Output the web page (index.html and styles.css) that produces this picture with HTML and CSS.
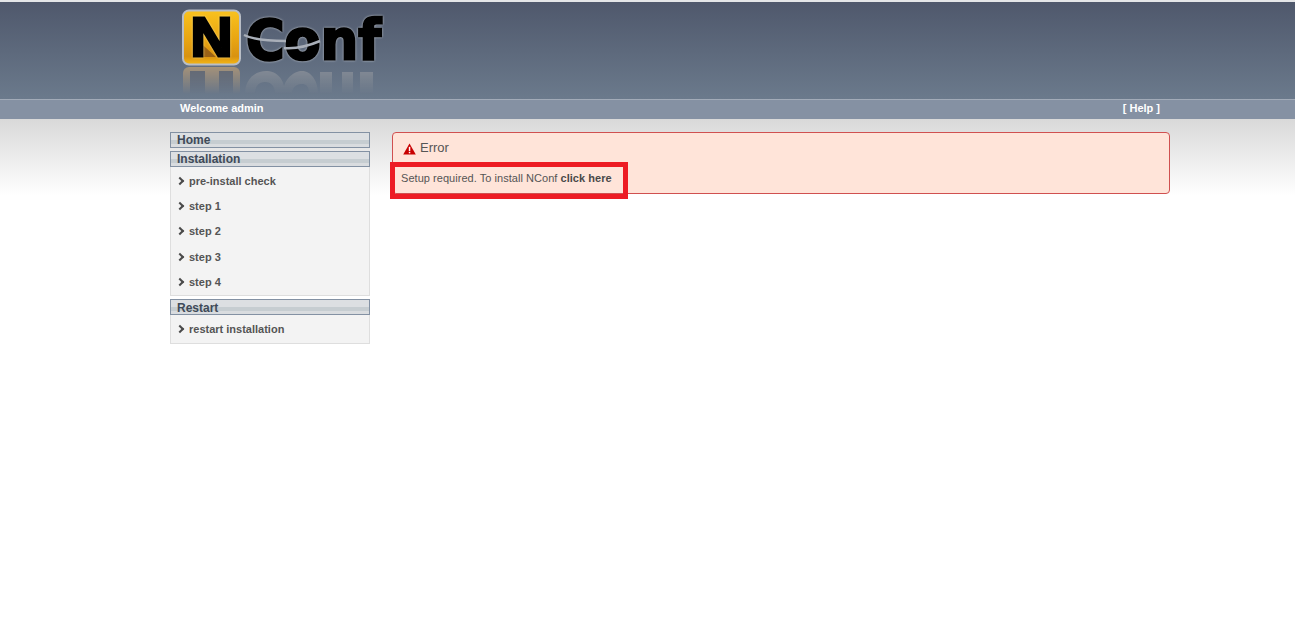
FILE: index.html
```html
<!DOCTYPE html>
<html lang="en">
<head>
<meta charset="utf-8">
<title>NConf</title>
<link rel="stylesheet" href="styles.css">
</head>
<body>
<header class="banner">
  <div class="wrap">
    <svg class="logo" width="220" height="97" viewBox="0 0 220 97" aria-label="NConf">
      <defs>
        <linearGradient id="gold" x1="0" y1="0" x2="0" y2="1">
          <stop offset="0" stop-color="#f9c21e"/>
          <stop offset="0.55" stop-color="#e8a412"/>
          <stop offset="0.85" stop-color="#d89210"/>
          <stop offset="1" stop-color="#f6b814"/>
        </linearGradient>
        <linearGradient id="refl" x1="0" y1="0" x2="0" y2="1">
          <stop offset="0" stop-color="#fff" stop-opacity="0.85"/>
          <stop offset="1" stop-color="#fff" stop-opacity="0"/>
        </linearGradient>
        <mask id="fade"><rect x="0" y="66" width="220" height="28" fill="url(#refl)"/></mask>
      </defs>
      <g mask="url(#fade)">
        <rect x="5" y="67" width="57" height="30" rx="6" fill="#b49a78"/>
        <rect x="12" y="71" width="15" height="24" fill="#666870"/>
        <rect x="41" y="71" width="14" height="24" fill="#666870"/>
        <path d="M67 94C67 78 78 71 88 71S107 78 107 94H97C97 86 93 82 87 82S77 86 77 94Z" fill="#8f949b"/>
        <path d="M105 94C105 78 117 71 124 71S140 78 140 94H131C131 86 128 84 124 84S114 86 114 94Z" fill="#8f949b"/>
        <rect x="142" y="72" width="12" height="22" fill="#8f949b"/>
        <rect x="164" y="72" width="11" height="22" fill="#8f949b"/>
        <rect x="182" y="72" width="13" height="22" fill="#8f949b"/>
      </g>
      <rect x="5" y="10.5" width="57" height="54" rx="6" fill="url(#gold)" stroke="#b9bec6" stroke-width="2"/>
      <path d="M17 57V38L38 57Z" fill="#9a6216"/>
      <text class="logo-n" x="33.5" y="56" textLength="42" lengthAdjust="spacingAndGlyphs">N</text>
      <text class="logo-conf" x="68" y="59" textLength="135" lengthAdjust="spacingAndGlyphs">Conf</text>
      <path class="logo-cut" d="M66 35C74 39 92 41 108 41"/>
      <path class="logo-cut" d="M106 48C118 49 128 47 142 41"/>
    </svg>
  </div>
</header>
<nav class="strip">
  <div class="wrap strip-row">
    <span>Welcome admin</span>
    <a href="#">[ Help ]</a>
  </div>
</nav>
<div class="wash">
  <div class="wrap columns">
    <aside class="sidebar">
      <h2 class="sec">Home</h2>
      <h2 class="sec">Installation</h2>
      <ul class="menu">
        <li><a href="#">pre-install check</a></li>
        <li><a href="#">step 1</a></li>
        <li><a href="#">step 2</a></li>
        <li><a href="#">step 3</a></li>
        <li><a href="#">step 4</a></li>
      </ul>
      <h2 class="sec sec-gap">Restart</h2>
      <ul class="menu menu-single">
        <li><a href="#">restart installation</a></li>
      </ul>
    </aside>
    <main class="content">
      <section class="alert">
        <h1 class="alert-title">
          <svg width="13" height="12" viewBox="0 0 13 12"><path d="M6.5 .5 12.8 11.6H.2Z" fill="#c80000"/><rect x="5.8" y="3.8" width="1.5" height="4.2" fill="#fff"/><rect x="5.8" y="8.8" width="1.5" height="1.5" fill="#fff"/></svg>
          Error
        </h1>
        <p class="alert-text">Setup required. To install NConf <a href="#">click here</a></p>
        <div class="marker"></div>
      </section>
    </main>
  </div>
</div>
</body>
</html>
```
FILE: styles.css
```css
* { box-sizing: border-box; }
html, body { margin: 0; padding: 0; }
body {
  background: #fff;
  font-family: "Liberation Sans", Arial, sans-serif;
  color: #444;
  height: 633px;
  overflow: hidden;
}
.wrap { width: 1000px; margin-left: 170px; }
.banner {
  height: 99px;
  border-top: 2px solid #e4e6e8;
  background: linear-gradient(#4f586c, #6b7a8c);
}
.logo { display: block; margin-left: 8px; margin-top: -2px; }
.logo-n {
  font: 700 56px "Liberation Sans", Arial, sans-serif;
  fill: #000;
  stroke: #000;
  stroke-width: 3px;
  text-anchor: middle;
  filter: drop-shadow(0 0 1px #ffe27a);
}
.logo-conf {
  font: 700 55px "DejaVu Sans", sans-serif;
  fill: #000;
  stroke: #000;
  stroke-width: 2.5px;
  filter: drop-shadow(0 0 1px #c4c9d0);
}
.logo-cut { fill: none; stroke: #a9afb9; stroke-width: 2.5px; }
.strip {
  height: 20px;
  background: #8591a3;
  border-top: 1px solid #a2abb8;
  color: #fff;
  font-size: 11px;
  font-weight: 700;
}
.strip-row {
  display: flex;
  justify-content: space-between;
  align-items: center;
  height: 16px;
  padding: 0 10px;
}
.strip a { color: #fff; text-decoration: none; }
.wash {
  height: 514px;
  background: linear-gradient(#d9d9d9, #fff 76px);
}
.columns {
  display: flex;
  align-items: flex-start;
  gap: 22px;
  padding-top: 13px;
}
.sidebar { width: 200px; flex: none; }
.sec {
  margin: 0 0 3px;
  height: 16px;
  padding-left: 6px;
  font-size: 12px;
  font-weight: 700;
  line-height: 15px;
  color: #3f4a58;
  border: 1px solid #8391a3;
  background: linear-gradient(#dcdfe2 0 50%, #c6cdd1 50% 80%, #d9dcdf 80%);
}
.sec-gap { margin-top: 3px; margin-bottom: 0; line-height: 17px; }
.menu {
  list-style: none;
  margin: -3px 0 0;
  padding: 2px 0 0;
  background: #f3f3f3;
  border: 1px solid #dedede;
  border-top: 0;
}
.menu li { height: 25.2px; padding-left: 18px; font-size: 11px; font-weight: 700; line-height: 25px; position: relative; }
.menu li::before {
  content: "";
  position: absolute;
  left: 6px;
  top: 9px;
  width: 4px;
  height: 4px;
  border-top: 2px solid #4a4a4a;
  border-right: 2px solid #4a4a4a;
  transform: rotate(45deg);
}
.menu a { color: #555; text-decoration: none; }
.menu-single { margin-top: 0; padding-top: 2px; }
.menu-single li { height: 26px; }
.content { width: 778px; flex: none; }
.alert {
  position: relative;
  height: 62px;
  background: #ffe4d9;
  border: 1px solid #d05050;
  border-radius: 4px;
  padding: 0 8px;
}
.alert-title {
  display: flex;
  align-items: center;
  gap: 4px;
  margin: 0 0 0 2px;
  height: 29px;
  font-size: 13px;
  font-weight: 400;
  color: #555;
}
.alert-title svg { flex: none; margin-top: 2px; }
.alert-text {
  margin: 9px 0 0;
  font-size: 11px;
  line-height: 14px;
  letter-spacing: 0.04px;
  color: #555;
}
.alert-text a { color: #4a4a4a; font-weight: 700; text-decoration: none; }
.marker {
  position: absolute;
  left: -3px;
  top: 29px;
  width: 238px;
  height: 37px;
  border: 5px solid #ed1c24;
}
```
